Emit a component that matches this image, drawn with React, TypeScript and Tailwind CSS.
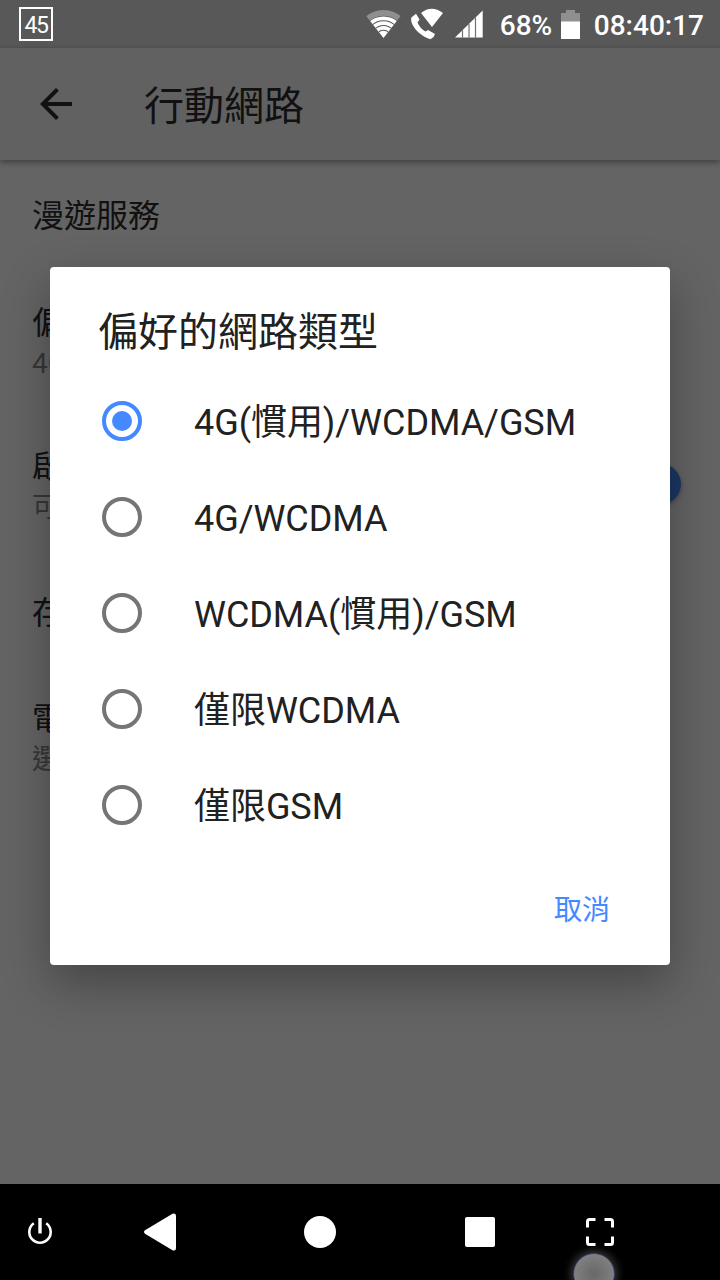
const options = [
  '4G(慣用)/WCDMA/GSM',
  '4G/WCDMA',
  'WCDMA(慣用)/GSM',
  '僅限WCDMA',
  '僅限GSM',
];

const WifiIcon = () => (
  <svg className="w-[36px] h-[30px]" viewBox="0 0 36 30">
    <defs>
      <clipPath id="fan">
        <path d="M18.500 29 L.8 6.500 V0 H36 V6.500 Z" />
      </clipPath>
    </defs>
    <g clipPath="url(#fan)">
      <circle cx="18.500" cy="29" r="28" fill="#8f8f8f" />
      <circle cx="18.500" cy="29" r="22.200" fill="#585858" />
      <circle cx="18.500" cy="29" r="21.600" fill="#fff" />
      <g fill="none" stroke="#585858" strokeWidth="1.100">
        <circle cx="18.500" cy="29" r="17.200" />
        <circle cx="18.500" cy="29" r="12.500" />
        <circle cx="18.500" cy="29" r="7.700" />
      </g>
    </g>
  </svg>
);

const CallIcon = () => (
  <svg className="w-[34px] h-[32px]" viewBox="410 8 34 32" fill="#fff">
    <path d="M411 19Q411 17 413.500 15.800L416 13.800L419.500 19.500L417.500 22.500Q420 28.500 425.500 31.500L428 30L435 34L433.500 37L430.500 39.300Q425 38 418 32Q411 25 411 19Z" />
    <path d="M432 27L421 13Q431.500 4.500 443 13Z" />
  </svg>
);

const SignalIcon = () => (
  <svg className="w-[28px] h-[28px]" viewBox="455 10.500 28 28">
    <path d="M455 38L482.700 11V38Z" fill="#fff" />
    <path d="M462.500 30.700V38M469 24.400V38M475.500 18V38" stroke="#707070" strokeWidth="1.200" />
  </svg>
);

const BatteryIcon = () => (
  <svg className="w-[19px] h-[29px]" viewBox="0 0 19 29">
    <path d="M5 0H14V3H19V12H0V3H5Z" fill="#8f8f8f" />
    <path d="M0 11.500H19V29H0Z" fill="#fff" />
  </svg>
);

const StatusBar = () => (
  <div className="h-12 shrink-0 bg-[#585858] flex items-center justify-between pl-[19px] pr-4 text-white">
    <div className="w-[34px] h-[34px] border-2 border-white flex items-center justify-center pt-[2px] text-[23px] leading-none tracking-[-1.5px]">
      45
    </div>
    <div className="flex items-center text-[28px] leading-none font-medium">
      <WifiIcon />
      <div className="w-[9px]" />
      <CallIcon />
      <div className="w-[11px]" />
      <SignalIcon />
      <span className="ml-[17px] w-[53px] mt-[3px]">68%</span>
      <div className="w-[8px]" />
      <BatteryIcon />
      <span className="ml-[14px] mt-[3px]">08:40:17</span>
    </div>
  </div>
);

const Setting = ({ title, summary }: { title: string; summary?: string }) => (
  <div className="px-8 pt-0.5 flex flex-col justify-center text-[32px] leading-10 text-[#111]">
    <div>{title}</div>
    {summary && <div className="pt-px text-[28px] text-[#373737]">{summary}</div>}
  </div>
);

const Radio = ({ checked }: { checked: boolean }) => (
  <span
    className={
      checked
        ? 'w-10 h-10 rounded-full border-4 border-[#4489ff] flex items-center justify-center'
        : 'w-10 h-10 rounded-full border-4 border-[#757575]'
    }
  >
    {checked && <span className="w-5 h-5 rounded-full bg-[#4489ff]" />}
  </span>
);

const NetworkDialog = () => (
  <div className="absolute left-[50px] top-[267px] w-[620px] h-[698px] bg-white rounded shadow-[0_18px_48px_rgba(0,0,0,0.32)] flex flex-col">
    <h2 className="h-[106px] pl-12 pt-9 text-[40px] leading-[60px] text-[#212121]">偏好的網路類型</h2>
    <div>
      {options.map((label, i) => (
        <div key={label} className="h-24 pl-[52px] flex items-center">
          <Radio checked={i === 0} />
          <span className="ml-[52px] pt-1 text-[36px] leading-[48px] tracking-[-0.05px] text-[#212121]">{label}</span>
        </div>
      ))}
    </div>
    <div className="flex-1 flex items-center justify-end pr-[60px] pt-1 text-[28px] leading-10 text-[#4489ff]">
      取消
    </div>
  </div>
);

const NavBar = () => (
  <div className="h-24 shrink-0 bg-black grid grid-cols-[80px_160px_160px_160px_80px_80px] items-center justify-items-center">
    <svg className="w-[26px] h-[28px]" viewBox="27 1218 26 28" fill="none" stroke="#fff">
      <path d="M33.800 1223.300A10.700 10.700 0 1 0 46.200 1223.300" strokeWidth="2.600" />
      <path d="M40 1218V1233.500" strokeWidth="3.400" />
    </svg>
    <svg className="w-[32px] h-[38px]" viewBox="0 0 32 38" fill="#fff">
      <path d="M1 17.300L28.500 .8Q32 -.5 32 3V35Q32 38.500 28.500 37.200L1 20.700Q-1 19 1 17.300Z" />
    </svg>
    <div className="w-8 h-8 rounded-full bg-white" />
    <div className="w-[30px] h-[30px] rounded-[2px] bg-white" />
    <svg className="w-[28px] h-[28px]" viewBox="0 0 28 28" fill="none" stroke="#fff" strokeWidth="3">
      <path d="M1.500 9.500V3.500Q1.500 1.500 3.500 1.500H9.500M18.500 1.500H24.500Q26.500 1.500 26.500 3.500V9.500M26.500 18.500V24.500Q26.500 26.500 24.500 26.500H18.500M9.500 26.500H3.500Q1.500 26.500 1.500 24.500V18.500" />
    </svg>
  </div>
);

export default function App() {
  return (
    <div className="relative w-[720px] h-[1280px] overflow-hidden flex flex-col bg-[#646464] font-['Roboto','Noto_Sans_CJK_TC',sans-serif]">
      <StatusBar />
      <header className="h-28 shrink-0 bg-[#616161] flex items-center pl-8 shadow-[0_2px_6px_rgba(0,0,0,0.4)] text-[#111]">
        <svg className="w-12 h-12" viewBox="0 0 24 24" fill="#111">
          <path d="M20 11H7.830l5.590-5.590L12 4l-8 8 8 8 1.410-1.410L7.830 13H20v-2z" />
        </svg>
        <h1 className="ml-16 pt-1.5 text-[40px] leading-[60px]">行動網路</h1>
      </header>
      <main className="flex-1 grid grid-rows-[110px_144px_144px_108px_144px]">
        <Setting title="漫遊服務" />
        <Setting title="偏好" summary="4G" />
        <div className="flex items-center justify-between pr-[39px]">
          <Setting title="啟用" summary="可用" />
          <span className="w-10 h-10 -mt-1 rounded-full bg-[#1b3766] shadow-[0_2px_4px_rgba(0,0,0,0.3)]" />
        </div>
        <Setting title="存取" />
        <Setting title="電信" summary="選擇" />
      </main>
      <NavBar />
      <NetworkDialog />
      {/* touch indicator */}
      <div className="absolute left-[573px] top-[1253px] w-[42px] h-[42px] rounded-full border border-[#3a4372] bg-radial from-[#686868] to-[#8a8a8a] shadow-[0_0_8px_2px_rgba(150,150,150,0.4)]" />
    </div>
  );
}
